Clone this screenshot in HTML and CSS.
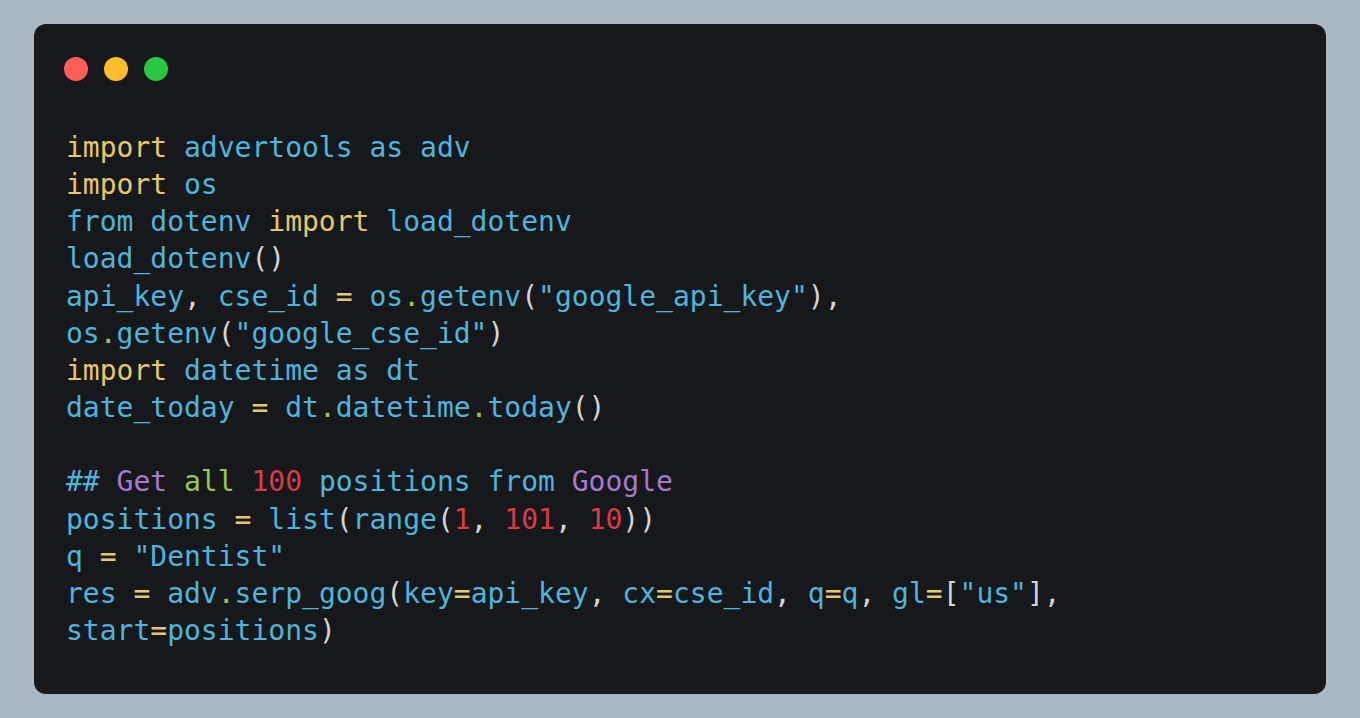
FILE: index.html
```html
<!DOCTYPE html>
<html>
<head>
<meta charset="utf-8">
<link rel="stylesheet" href="styles.css">
</head>
<body>
<div class="card">
  <div class="dots">
    <span class="dot red"></span>
    <span class="dot yellow"></span>
    <span class="dot green"></span>
  </div>
<pre class="code"><span class="kw">import</span> advertools <span class="nm">as</span> adv
<span class="kw">import</span> os
from dotenv <span class="kw">import</span> load<span class="u">_</span>dotenv
load<span class="u">_</span>dotenv<span class="p">()</span>
api<span class="u">_</span>key<span class="p">,</span> cse<span class="u">_</span>id <span class="op">=</span> os<span class="dt">.</span>getenv<span class="p">(</span>"google<span class="u">_</span>api<span class="u">_</span>key"<span class="p">),</span>
os<span class="dt">.</span>getenv<span class="p">(</span>"google<span class="u">_</span>cse<span class="u">_</span>id"<span class="p">)</span>
<span class="kw">import</span> datetime <span class="nm">as</span> dt
date<span class="u">_</span>today <span class="op">=</span> dt<span class="dt">.</span>datetime<span class="dt">.</span>today<span class="p">()</span>

## <span class="pu">Get</span> <span class="gr">all</span> <span class="num">100</span> positions from <span class="pu">Google</span>
positions <span class="op">=</span> list<span class="p">(</span>range<span class="p">(</span><span class="num">1</span><span class="p">,</span> <span class="num">101</span><span class="p">,</span> <span class="num">10</span><span class="p">))</span>
q <span class="op">=</span> "Dentist"
res <span class="op">=</span> adv<span class="dt">.</span>serp<span class="u">_</span>goog<span class="p">(</span>key<span class="op">=</span>api<span class="u">_</span>key<span class="p">,</span> cx<span class="op">=</span>cse<span class="u">_</span>id<span class="p">,</span> q<span class="op">=</span>q<span class="p">,</span> gl<span class="op">=</span><span class="p">[</span>"us"<span class="p">],</span>
start<span class="op">=</span>positions<span class="p">)</span></pre>
</div>
</body>
</html>
```
FILE: styles.css
```css
html, body {
  margin: 0;
  padding: 0;
  background: #abb7c3;
}
body {
  padding: 24px 34px;
  height: 718px;
  box-sizing: border-box;
}
.card {
  background: #17181b;
  border-radius: 12px;
  height: 670px;
  box-sizing: border-box;
  padding: 33px 32px 0 30px;
}
.dots {
  display: flex;
  gap: 16px;
  height: 24px;
}
.dot {
  width: 24px;
  height: 24px;
  border-radius: 50%;
  display: block;
}
.red { background: #ff5f58; }
.yellow { background: #ffbd2e; }
.green { background: #28c840; }
.code {
  margin: 48px 0 0 0;
  padding-left: 2px;
  font-family: "DejaVu Sans Mono", monospace;
  font-size: 28px;
  line-height: 37.16px;
  color: #4db5dc;
  white-space: pre;
}
.u {
  display: inline-block;
  line-height: 28px;
  vertical-align: 1px;
}
.kw { color: #e5c76b; }
.nm { color: #4db5dc; }
.op { color: #e5c76b; }
.p { color: #d4d4d4; }
.dt { color: #9bc74c; }
.pu { color: #a57bd0; }
.gr { color: #9bc74c; }
.num { color: #d83b45; }
```
